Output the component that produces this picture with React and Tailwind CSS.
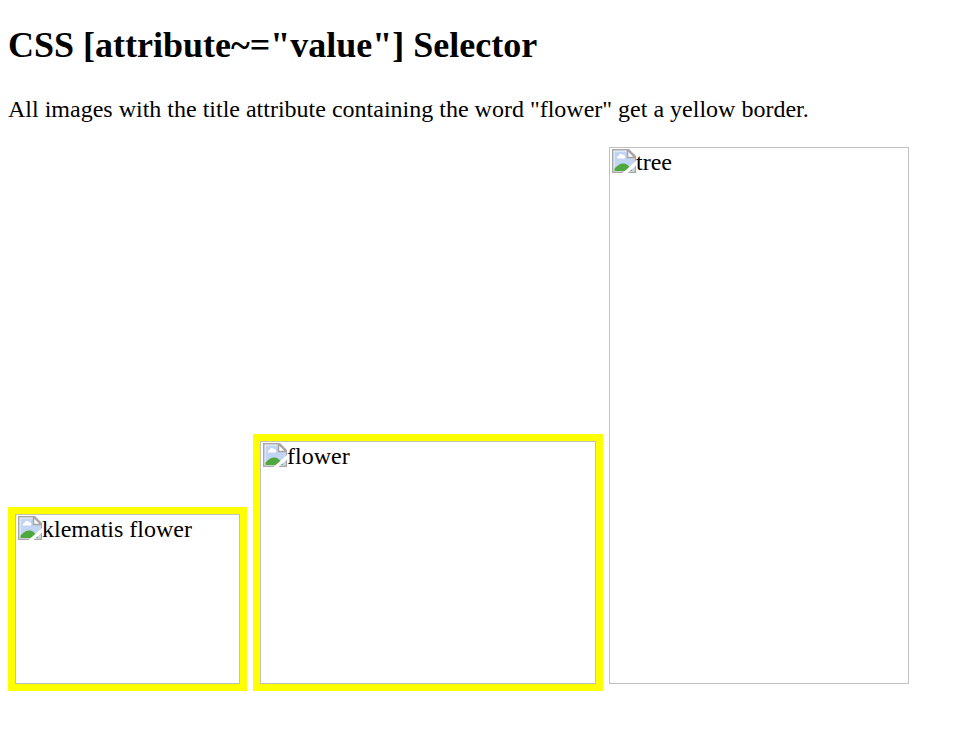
function BrokenImageIcon() {
  return (
    <svg aria-hidden="true" className="h-6 w-6 shrink-0" viewBox="0 0 24 24">
      <path d="M0 0H17L24 7V24H0Z" fill="#a8a8a8" />
      <path d="M1.500 1.500H16L22.500 8V22.500H1.500Z" fill="#f4f7fd" />
      <path d="M2.500 2.500H15V9H22V22H2.500Z" fill="#c3d5f5" />
      <path d="M5 9.500a2 2 0 0 1 1.500-2.500 2.500 2.500 0 0 1 4.500-1 2 2 0 0 1 1.500 3.500Z" fill="#fff" />
      <path d="M2.500 22v-2.500C6 16 8 14.500 11 14.500S17 16 20 22Z" fill="#4fa83d" />
      <path d="M15.500 1v7.500H23Z" fill="#fff" stroke="#a5a5a5" strokeWidth="1.500" />
      <path d="M24 12V16.500L15.500 24H10.500Z" fill="#fff" />
    </svg>
  );
}

function Picture({ alt, className }) {
  return (
    <div role="img" aria-label={alt} className={className}>
      <div className="flex h-full items-start border border-[#c0c0c0] px-0.5 pt-px">
        <BrokenImageIcon />
        <span className="leading-[27px]">{alt}</span>
      </div>
    </div>
  );
}

export default function App() {
  return (
    <main className="bg-white px-2 pt-6 pb-10 font-['Liberation_Serif','Times_New_Roman',serif] text-2xl text-black">
      <h2 className="text-4xl leading-[42px] font-bold">CSS [attribute~="value"] Selector</h2>
      <p className="mt-[30px] leading-[27px]">
        All images with the title attribute containing the word "flower" get a yellow border.
      </p>
      <div className="mt-6 flex items-end gap-1.5">
        <Picture alt="klematis flower" className="h-[184px] w-[239px] shrink-0 border-[7px] border-[#ffff00]" />
        <Picture alt="flower" className="h-[257px] w-[350px] shrink-0 border-[7px] border-[#ffff00]" />
        <Picture alt="tree" className="mb-[7px] h-[537px] w-[300px] shrink-0" />
      </div>
    </main>
  );
}
